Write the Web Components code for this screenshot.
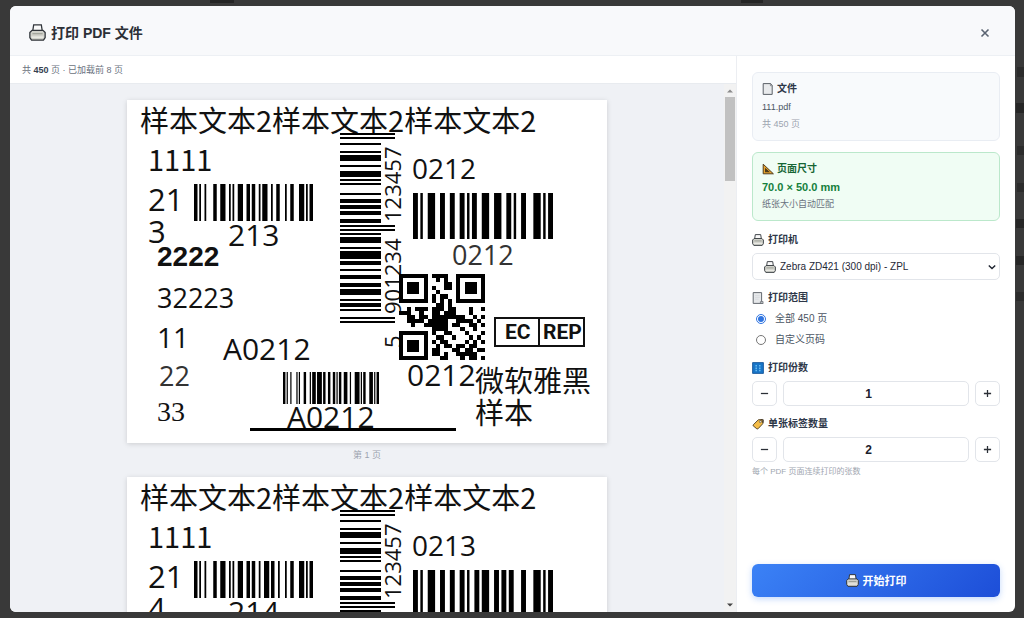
<!DOCTYPE html>
<html lang="zh-CN">
<head>
<meta charset="utf-8">
<title>打印 PDF 文件</title>
<style>
  html, body { height: 100%; }
  body {
    margin: 0;
    box-sizing: border-box;
    padding: 6px 9px 6px 10px;
    background:
      linear-gradient(#252525, #252525) 21% 0 / 24px 3px no-repeat,
      linear-gradient(#252525, #252525) 74% 0 / 22px 3px no-repeat,
      linear-gradient(#2c2c2c, #2c2c2c) 100% 11% / 7px 10px no-repeat,
      linear-gradient(#262626, #262626) 100% 17% / 8px 10px no-repeat,
      linear-gradient(#2c2c2c, #2c2c2c) 100% 24% / 7px 9px no-repeat,
      linear-gradient(#2c2c2c, #2c2c2c) 100% 30% / 7px 9px no-repeat,
      linear-gradient(#262626, #262626) 100% 36% / 8px 9px no-repeat,
      linear-gradient(#262626, #262626) 100% 42% / 8px 9px no-repeat,
      linear-gradient(#2c2c2c, #2c2c2c) 100% 48% / 8px 9px no-repeat,
      #393939;
    font-family: "Liberation Sans", "Noto Sans CJK SC", sans-serif;
    font-size: 10px;
    line-height: 16px;
    color: #2d3748;
  }
</style>
</head>
<body>
<print-dialog>
  <span slot="title">打印 PDF 文件</span>
  <span slot="info">共 <b style="color:#374151">450</b> 页 · 已加载前 8 页</span>

  <label-page slot="pages" row="213" code="0212" number="1"></label-page>
  <label-page slot="pages" row="214" code="0213" number="2"></label-page>

  <info-card slot="side">
    <ui-icon slot="icon" name="file"></ui-icon>
    <span slot="title">文件</span>
    <span slot="main">111.pdf</span>
    <span slot="note">共 450 页</span>
  </info-card>
  <info-card slot="side" kind="success">
    <ui-icon slot="icon" name="ruler"></ui-icon>
    <span slot="title">页面尺寸</span>
    <span slot="main">70.0 × 50.0 mm</span>
    <span slot="note">纸张大小自动匹配</span>
  </info-card>
  <printer-select slot="side"></printer-select>
  <page-range slot="side"></page-range>
  <number-stepper slot="side" icon="numbers" label="打印份数" value="1"></number-stepper>
  <number-stepper slot="side" icon="tag" label="单张标签数量" value="2" hint="每个 PDF 页面连续打印的张数"></number-stepper>
</print-dialog>

<script>
const ICONS = {
  printer: `
    <path d="M4.500 7.500 5.500 1h9l1 6.500" fill="#fafafa" stroke="#30343a" stroke-width="1.500"/>
    <path d="M3.500 7.500h13L19 10v6l-2 3H3l-2-3v-6z" fill="#d0d1ca" stroke="#30343a" stroke-width="1.500" stroke-linejoin="round"/>
    <path d="M4 11.500h12" stroke="#96998f" stroke-width="1.400"/>
    <path d="M3 15.500h14" stroke="#f0f0ea" stroke-width="1.600"/>`,
  file: `
    <path d="M2 1h12.500L17 4v15H2z" fill="#e8eaec" stroke="#4b5058" stroke-width="1.500"/>
    <path d="M14 1.500V4.500H17" fill="#fff" stroke="#4b5058"/>`,
  ruler: `
    <path d="M2 2v16h17z" fill="#eaa52c" stroke="#493719" stroke-width="1.600" stroke-linejoin="round"/>
    <path d="M6 10v4.500h5z" fill="#493719" stroke="#493719" stroke-width="1.800"/>`,
  pages: `
    <path d="M2 1h14v14l2 4H2z" fill="#e6e8ea" stroke="#555a62" stroke-width="1.500"/>
    <path d="M14 16v3h4.500v-3z" fill="#c8cbce" stroke="#555a62"/>
    <path d="M5 6h8M5 9h8M5 12h6" stroke="#d0d3d6"/>`,
  numbers: `
    <path d="M1 1h18v18H1z" fill="#1976c8" stroke="#14569a" stroke-width="1.500"/>
    <path d="M7 5v2.500M13 5v2.500M7 9v2.500M13 9v2.500M7 13v2.500M13 13v2.500" stroke="#69bdf2" stroke-width="2.500"/>`,
  tag: `
    <path d="M2 11.500 10.500 3l6.500-.5 1 7-8 8.500q-1 .5-2 0l-6-5q-.5-.7 0-1.500z" fill="#f5bd48" stroke="#4a3a1c" stroke-width="1.500"/>
    <circle cx="14" cy="6" r="1.800" fill="#fff" stroke="#4a3a1c"/>
    <path d="M14 5q3-4 5-2v5" fill="none" stroke="#3c3121" stroke-width="1.300"/>`,
  close: `<path d="M3 3l14 14M17 3 3 17" stroke="#5b6472" stroke-width="3.200"/>`,
  chevron: `<path d="M2 6l8 8 8-8" fill="none" stroke="#1f2430" stroke-width="3.500"/>`,
  minus: `<path d="M2 10h16" stroke="#2b2f36" stroke-width="2.800"/>`,
  plus: `<path d="M2 10h16M10 2v16" stroke="#2b2f36" stroke-width="2.800"/>`
}

customElements.define('ui-icon', class extends HTMLElement {
  constructor() {
    super()
    this.attachShadow({ mode: 'open' })
  }
  connectedCallback() {
    this.shadowRoot.innerHTML = `
      <style>
        :host { display: inline-flex; flex: none; width: var(--icon, 12px); height: var(--icon, 12px); }
        svg { width: 100%; height: 100%; }
      </style>
      <svg viewBox="0 0 20 20" fill="none" aria-hidden="true">${ICONS[this.getAttribute('name')]}</svg>`
  }
})

// Code 128 patterns, only the values used on the labels
const CODE128 = {
  2: '222221', 7: '122312', 10: '221312', 12: '112232', 13: '122132', 17: '123221', 18: '223211',
  19: '221132', 20: '221231', 28: '322112', 30: '212123', 33: '111323', 80: '134111', 99: '113141',
  104: '211214', 105: '211232'
}

function code128(values) {
  let sum = values[0]
  values.slice(1).forEach((v, i) => { sum += v * (i + 1) })
  const widths = [...values, sum % 103].map(v => CODE128[v] || CODE128[80]).join('') + '2331112'
  let bits = ''
  ;[...widths].forEach((w, i) => { bits += (i % 2 ? '0' : '1').repeat(+w) })
  return bits
}

function barPath(bits, x, y, width, height) {
  const m = width / bits.length
  let d = ''
  for (const run of bits.matchAll(/1+/g)) {
    d += `M${x + run.index * m} ${y}h${run[0].length * m}v${height}h${-run[0].length * m}z`
  }
  return d
}

// EAN-13, read from bottom to top
function eanPath(digits, x, bottom, length) {
  const L = ['0001101', '0011001', '0010011', '0111101', '0100011', '0110001', '0101111', '0111011', '0110111', '0001011']
  const right = n => L[n].replace(/./g, b => 1 - b)
  const even = n => [...right(n)].reverse().join('')
  let bits = '101'
  for (let i = 1; i < 7; i++) bits += 'LGGLLG'[i - 1] === 'L' ? L[digits[i]] : even(digits[i])
  bits += '01010'
  for (let i = 7; i < 13; i++) bits += right(digits[i])
  bits += '101'
  const m = length / 95
  let d = ''
  for (const run of bits.matchAll(/1+/g)) {
    const guard = run.index < 3 || run.index > 91 || (run.index > 44 && run.index < 50)
    const w = guard ? 55 : 41
    d += `M${x} ${bottom - run.index * m}h${w}v${-run[0].length * m}h${-w}z`
  }
  return d
}

const QR = [
  '111111101111001111111',
  '100000100101001000001',
  '101110100001101011101',
  '101110101001101011101',
  '101110100100001011101',
  '100000101011001000001',
  '111111101010101111111',
  '000000000110100000000',
  '001011101110110001001',
  '111001001101110001000',
  '001101101111111100101',
  '001111011111001111010',
  '000100111111011001101',
  '000000001111000100100',
  '111111101001100010001',
  '100000100110010001010',
  '101110101011000010101',
  '101110100101101101100',
  '101110101100011011011',
  '100000101101001111100',
  '111111100011000101101'
]

function qrPath(x, y, size) {
  const m = size / 21
  let d = ''
  QR.forEach((row, r) => {
    for (const run of row.matchAll(/1+/g)) {
      d += `M${x + run.index * m} ${y + r * m}h${run[0].length * m}v${m}h${-run[0].length * m}z`
    }
  })
  return d
}

customElements.define('label-page', class extends HTMLElement {
  constructor() {
    super()
    this.attachShadow({ mode: 'open' })
  }
  connectedCallback() {
    const row = this.getAttribute('row')
    const code = this.getAttribute('code')
    const rowBars = code128([104, ...[...row].map(c => +c + 16)])
    const codeBars = code128([105, +code.slice(0, 2), +code.slice(2)])
    this.shadowRoot.innerHTML = `
      <style>
        :host { display: block; flex: none; }
        .paper { display: block; width: 100%; background: #fff; box-shadow: 0 1px 5px #00000026; }
        text { font-family: "Open Sans", "Noto Sans CJK SC", sans-serif; font-size: 28px; fill: #111; }
        .cjk { font-family: "Noto Sans CJK SC", sans-serif; font-size: 29px; }
        .large { font-size: 31px; }
        .medium { font-size: 30px; }
        .small { font-size: 27px; }
        .light { fill: #333; }
        .bold { font-family: "Liberation Sans", sans-serif; font-weight: bold; }
        .serif { font-family: "Liberation Serif", serif; }
        .rep { font-family: Roboto, sans-serif; font-size: 21px; font-weight: bold; }
        .ean { font-size: 22px; }
        p { margin: 4px 0 0; text-align: center; font-size: 9px; line-height: 16px; color: #9ca3af; }
      </style>
      <svg class="paper" viewBox="0 0 480 343">
        <text class="cjk" x="13" y="32">样本文本2样本文本2样本文本2</text>
        <text class="cjk" x="21" y="71">1111</text>
        <text class="large" x="21" y="111">${row.slice(0, 2)}</text>
        <text class="large" x="21" y="143">${row.slice(2)}</text>
        <path d="${barPath(rowBars, 67, 84, 119, 37)}"/>
        <text class="medium" x="101" y="146">${row}</text>
        <text class="bold" x="30" y="166">2222</text>
        <text class="small" x="30" y="208">32223</text>
        <text x="30" y="248">11</text>
        <text class="small light" x="32" y="286">22</text>
        <text class="serif" x="30" y="321">33</text>
        <text class="medium" x="96" y="260">A${code}</text>
        <path d="${barPath(code128([104, 33, 99, 2, +code.slice(2)]), 156, 272, 96, 32)}"/>
        <text class="medium" x="160" y="328">A${code}</text>
        <path d="M123 328h206v3H123z"/>
        <path d="${eanPath('5901234123457', 213, 223, 190)}"/>
        <text class="ean" transform="translate(274 248) rotate(-90)">5</text>
        <text class="ean" transform="translate(274 214) rotate(-90)">901234</text>
        <text class="ean" transform="translate(274 122) rotate(-90)">123457</text>
        <text x="285" y="79">${code}</text>
        <path d="${barPath(codeBars, 286, 93, 140, 46)}"/>
        <text class="small light" x="325" y="165">${code}</text>
        <path d="${qrPath(272, 174, 86)}" shape-rendering="crispEdges"/>
        <text class="medium" x="280" y="286">${code}</text>
        <path d="M368 218h89v28h-89zM412 218v28" fill="none" stroke="#111" stroke-width="2"/>
        <text class="rep" x="378" y="239">EC</text>
        <text class="rep" x="416" y="239">REP</text>
        <text class="cjk" x="348" y="292">微软雅黑</text>
        <text class="cjk" x="348" y="324">样本</text>
      </svg>
      <p>第 ${this.getAttribute('number')} 页</p>`
  }
})

const cardTemplate = document.createElement('template')
cardTemplate.innerHTML = `
<style>
  :host {
    display: block;
    padding: 8px 9px;
    border: 1px solid #e9edf3;
    border-radius: 6px;
    background: #f8fafc;
    margin-bottom: 11px;
  }
  .title { display: flex; align-items: center; gap: 3px; font-weight: bold; line-height: 16px; }
  .main { line-height: 20px; color: #4b5563; font-size: 9px; }
  .note { line-height: 15px; color: #9ca3af; font-size: 9px; }
  :host([kind=success]) { background: #f0fdf4; border-color: #bbe8cb; }
  :host([kind=success]) .title { color: #166534; }
  :host([kind=success]) .main { color: #15803d; font-size: 11px; font-weight: bold; }
  :host([kind=success]) .note { color: #6b7280; }
</style>
<div class="title"><slot name="icon"></slot><slot name="title"></slot></div>
<div class="main"><slot name="main"></slot></div>
<div class="note"><slot name="note"></slot></div>
`

customElements.define('info-card', class extends HTMLElement {
  constructor() {
    super()
    this.attachShadow({ mode: 'open' })
    this.shadowRoot.appendChild(cardTemplate.content.cloneNode(true))
  }
})

// heading line shared by the form fields
const fieldStyle = `
  :host { display: block; margin-bottom: 10px; }
  .label { display: flex; align-items: center; gap: 4px; font-weight: bold; line-height: 16px; margin-bottom: 5px; }
`

customElements.define('printer-select', class extends HTMLElement {
  constructor() {
    super()
    this.attachShadow({ mode: 'open' })
    this.shadowRoot.innerHTML = `
      <style>
        ${fieldStyle}
        .box {
          display: flex;
          align-items: center;
          gap: 4px;
          height: 27px;
          box-sizing: border-box;
          padding: 0 3px 0 11px;
          border: 1px solid #e2e5ea;
          border-radius: 5px;
        }
        select {
          flex: 1;
          appearance: none;
          border: 0;
          padding: 0;
          background: none;
          font: inherit;
          font-size: 10px;
          color: #1f2937;
        }
        .arrow { --icon: 8px; }
      </style>
      <label class="label" for="printer"><ui-icon name="printer"></ui-icon>打印机</label>
      <div class="box">
        <ui-icon name="printer"></ui-icon>
        <select id="printer"><option>Zebra ZD421 (300 dpi) - ZPL</option></select>
        <ui-icon class="arrow" name="chevron"></ui-icon>
      </div>`
  }
})

customElements.define('page-range', class extends HTMLElement {
  constructor() {
    super()
    this.attachShadow({ mode: 'open' })
    this.shadowRoot.innerHTML = `
      <style>
        ${fieldStyle}
        fieldset { border: 0; margin: 0; padding: 0; min-width: 0; }
        legend { padding: 0; }
        .label { margin-bottom: 2px; }
        .option { display: flex; align-items: center; gap: 9px; padding-left: 4px; line-height: 21px; color: #4b5563; }
        input { width: 10px; height: 10px; margin: 0; accent-color: #2f74e0; }
      </style>
      <fieldset>
        <legend class="label"><ui-icon name="pages"></ui-icon>打印范围</legend>
        <label class="option"><input type="radio" name="range" checked>全部 450 页</label>
        <label class="option"><input type="radio" name="range">自定义页码</label>
      </fieldset>`
  }
})

customElements.define('number-stepper', class extends HTMLElement {
  constructor() {
    super()
    this.attachShadow({ mode: 'open' })
  }
  connectedCallback() {
    const hint = this.getAttribute('hint')
    this.shadowRoot.innerHTML = `
      <style>
        ${fieldStyle}
        .row { display: flex; align-items: center; gap: 6px; }
        button {
          display: flex;
          align-items: center;
          justify-content: center;
          width: 25px;
          height: 25px;
          padding: 0;
          border: 1px solid #e2e5ea;
          border-radius: 5px;
          background: #fff;
          --icon: 9px;
        }
        input {
          flex: 1;
          min-width: 0;
          height: 25px;
          box-sizing: border-box;
          padding: 0;
          border: 1px solid #e2e5ea;
          border-radius: 5px;
          text-align: center;
          font: bold 12px "Liberation Sans", sans-serif;
          color: #1a202c;
        }
        .hint { margin: 2px 0 0; font-size: 8px; line-height: 16px; color: #a0a6b0; }
      </style>
      <label class="label" for="count"><ui-icon name="${this.getAttribute('icon')}"></ui-icon>${this.getAttribute('label')}</label>
      <div class="row">
        <button type="button" id="less" aria-label="减少"><ui-icon name="minus"></ui-icon></button>
        <input id="count" type="number" min="1" value="${this.getAttribute('value')}">
        <button type="button" id="more" aria-label="增加"><ui-icon name="plus"></ui-icon></button>
      </div>
      ${hint ? `<p class="hint">${hint}</p>` : ''}`
    const input = this.shadowRoot.getElementById('count')
    this.shadowRoot.getElementById('less').addEventListener('click', () => input.stepDown())
    this.shadowRoot.getElementById('more').addEventListener('click', () => input.stepUp())
  }
})

const dialogTemplate = document.createElement('template')
dialogTemplate.innerHTML = `
<style>
  :host {
    display: flex;
    flex-direction: column;
    height: 100%;
    border-radius: 6px;
    overflow: hidden;
    background: #fff;
  }
  header {
    display: flex;
    align-items: center;
    gap: 5px;
    height: 50px;
    box-sizing: border-box;
    padding: 4px 25px 0 19px;
    border-bottom: 1px solid #edf0f4;
    background: #f8f9fb;
    --icon: 17px;
  }
  h1 { flex: 1; margin: 0; font-size: 14px; line-height: 20px; color: #2b2f36; }
  .close { display: flex; padding: 0; border: 0; background: none; --icon: 10px; }
  .content { flex: 1; display: flex; min-height: 0; }
  .preview { flex: 1; display: flex; flex-direction: column; min-width: 0; }
  .info { padding: 6px 12px 5px; line-height: 16px; font-size: 9px; color: #6b7280; border-bottom: 1px solid #e8ebef; }
  .view { flex: 1; display: flex; min-height: 0; background: #eff1f5; }
  .pages {
    flex: 1;
    display: flex;
    flex-direction: column;
    align-items: center;
    gap: 14px;
    overflow: hidden;
    padding: 16px 57px 0;
  }
  .pages ::slotted(label-page) { width: 80%; }
  .scroll { display: flex; flex-direction: column; align-items: center; width: 12px; background: #f2f2f2; }
  .scroll svg { width: 12px; height: 13px; flex: none; }
  .thumb { width: 10px; height: 16%; background: #c1c1c1; }
  .space { flex: 1; }
  aside {
    display: flex;
    flex-direction: column;
    width: 248px;
    flex: none;
    padding: 16px 15px 15px;
    border-left: 1px solid #eceef2;
  }
  .print {
    display: flex;
    align-items: center;
    justify-content: center;
    gap: 4px;
    height: 33px;
    margin-top: auto;
    padding: 0;
    border: 0;
    border-radius: 6px;
    background: linear-gradient(135deg, #3b82f6, #1d4ed8);
    box-shadow: 0 2px 6px #3b82f64d;
    color: #fff;
    font: inherit;
    font-size: 11px;
    font-weight: bold;
    --icon: 13px;
  }
</style>
<header>
  <ui-icon name="printer"></ui-icon>
  <h1><slot name="title"></slot></h1>
  <button class="close" type="button" aria-label="关闭"><ui-icon name="close"></ui-icon></button>
</header>
<div class="content">
  <section class="preview">
    <div class="info"><slot name="info"></slot></div>
    <div class="view">
      <div class="pages"><slot name="pages"></slot></div>
      <div class="scroll" aria-hidden="true">
        <svg viewBox="0 0 12 12"><path d="M3 8l3-3 3 3z" fill="#8a8a8a"/></svg>
        <div class="thumb"></div>
        <div class="space"></div>
        <svg viewBox="0 0 12 12"><path d="M3 4l3 3 3-3z" fill="#444"/></svg>
      </div>
    </div>
  </section>
  <aside>
    <slot name="side"></slot>
    <button class="print" type="button"><ui-icon name="printer"></ui-icon>开始打印</button>
  </aside>
</div>
`

customElements.define('print-dialog', class extends HTMLElement {
  constructor() {
    super()
    this.attachShadow({ mode: 'open' })
    this.shadowRoot.appendChild(dialogTemplate.content.cloneNode(true))
  }
})
</script>
</body>
</html>
